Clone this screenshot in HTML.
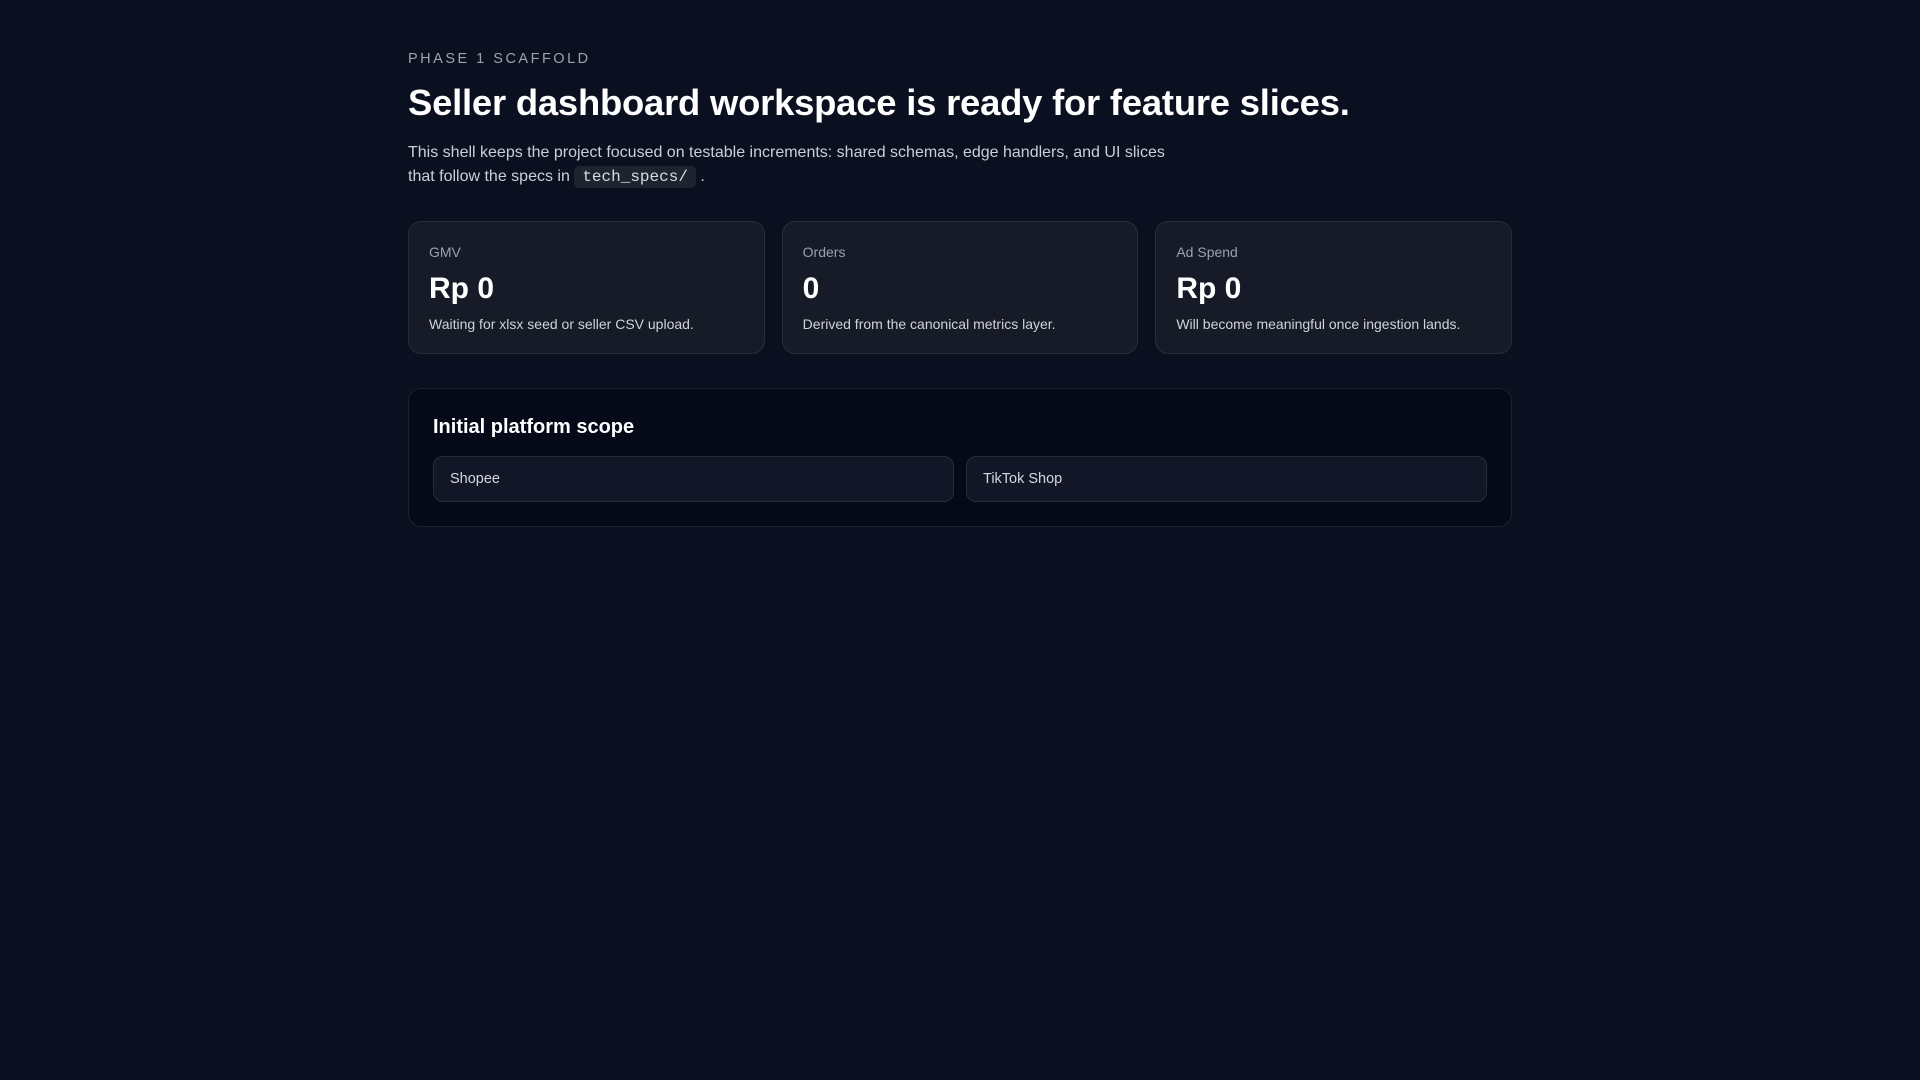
<!DOCTYPE html>
<html><head><meta charset="utf-8"><style>
*{box-sizing:border-box;margin:0;padding:0}
body{width:1920px;height:1080px;background:#0b1020;font-family:"Liberation Sans",sans-serif;color:#e5e7eb}
.wrap{position:absolute;left:408px;width:1104px;top:0}
.eyebrow{position:absolute;top:51px;font-size:14.5px;letter-spacing:2.5px;color:#9ca3af;white-space:nowrap}
h1{position:absolute;top:82px;font-size:36.4px;font-weight:700;color:#fff;white-space:nowrap;letter-spacing:-0.2px}
p.lead{position:absolute;top:141px;width:800px;font-size:16px;line-height:24px;color:#cbd0d8}
code{font-family:"Liberation Mono",monospace;background:#1e2330;border-radius:5px;padding:2px 8px;font-size:16px;color:#d7dbe2}
.cards{position:absolute;top:221px;left:0;width:1104px;display:flex;gap:17px}
.card{flex:1;height:133px;background:#161b27;border:1px solid #272d3b;border-radius:13px;padding:20px 20px}
.card .l{font-size:14px;color:#9aa1ad;margin-top:2px}
.card .v{font-size:30px;font-weight:700;color:#fff;margin-top:12px}
.card .d{font-size:14px;color:#cfd3da;margin-top:10px}
.panel{position:absolute;top:388px;left:0;width:1104px;height:139px;background:#060a18;border:1px solid #1c2130;border-radius:13px;padding:24px}
.panel h2{font-size:20px;font-weight:700;color:#fff;margin-top:3px}
.items{display:flex;gap:12px;margin-top:17px}
.item{flex:1;height:46px;background:#121626;border:1px solid #272c3b;border-radius:10px;padding:0 16px;line-height:44px;font-size:14.5px;color:#d3d7de}
</style></head><body>
<div class="wrap">
<div class="eyebrow">PHASE 1 SCAFFOLD</div>
<h1>Seller dashboard workspace is ready for feature slices.</h1>
<p class="lead">This shell keeps the project focused on testable increments: shared schemas, edge handlers, and UI slices<br>that follow the specs in <code>tech_specs/</code> .</p>
<div class="cards">
<div class="card"><div class="l">GMV</div><div class="v">Rp 0</div><div class="d">Waiting for xlsx seed or seller CSV upload.</div></div>
<div class="card"><div class="l">Orders</div><div class="v">0</div><div class="d">Derived from the canonical metrics layer.</div></div>
<div class="card"><div class="l">Ad Spend</div><div class="v">Rp 0</div><div class="d">Will become meaningful once ingestion lands.</div></div>
</div>
<div class="panel"><h2>Initial platform scope</h2>
<div class="items"><div class="item">Shopee</div><div class="item">TikTok Shop</div></div></div>
</div>
</body></html>
